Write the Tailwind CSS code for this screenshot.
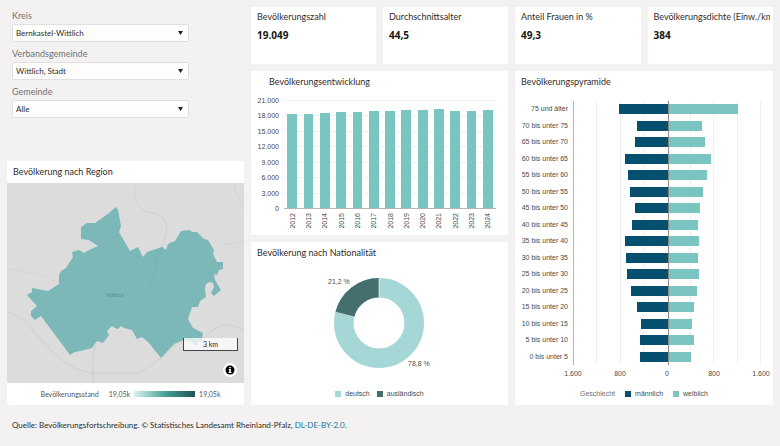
<!DOCTYPE html>
<html lang="de">
<head>
    <meta charset="UTF-8">
    <meta name="viewport" content="width=device-width, initial-scale=1.0">
    <title>Bevölkerung – Bernkastel-Wittlich</title>
    <script src="https://cdn.jsdelivr.net/npm/@tailwindcss/browser@4"></script>
</head>
<body class="bg-[#f3f1f2] text-[#2f2d2b] font-[Lato,'Noto_Sans',sans-serif] min-h-screen">
    <main class="grid grid-cols-[237fr_257fr_258fr] gap-[7px] p-[7px] pb-0">

        <!-- Linke Spalte: Filter und Karte -->
        <div class="flex flex-col min-w-0">
            <form class="flex flex-col gap-[5px] pt-[2px] pl-[5px] w-[182px]">
                <div class="flex flex-col gap-px">
                    <label for="kreis" class="text-[9px] leading-[14px] text-[#757371]">Kreis</label>
                    <div class="relative">
                        <select id="kreis" class="block appearance-none w-full h-[18px] bg-[#fdfdfc] border border-[#e2e0df] rounded-xs pl-[3px] text-[8px] leading-[14px]">
                            <option>Bernkastel-Wittlich</option>
                        </select>
                        <svg class="absolute right-[6px] top-[7px] w-[5px] h-[4px] pointer-events-none" viewBox="0 0 5 4"><path d="M0 0h5L2.5 4z" fill="#222"/></svg>
                    </div>
                </div>
                <div class="flex flex-col gap-px">
                    <label for="verbandsgemeinde" class="text-[9px] leading-[14px] text-[#757371]">Verbandsgemeinde</label>
                    <div class="relative">
                        <select id="verbandsgemeinde" class="block appearance-none w-full h-[18px] bg-[#fdfdfc] border border-[#e2e0df] rounded-xs pl-[3px] text-[8px] leading-[14px]">
                            <option>Wittlich, Stadt</option>
                        </select>
                        <svg class="absolute right-[6px] top-[7px] w-[5px] h-[4px] pointer-events-none" viewBox="0 0 5 4"><path d="M0 0h5L2.5 4z" fill="#222"/></svg>
                    </div>
                </div>
                <div class="flex flex-col gap-px">
                    <label for="gemeinde" class="text-[9px] leading-[14px] text-[#757371]">Gemeinde</label>
                    <div class="relative">
                        <select id="gemeinde" class="block appearance-none w-full h-[18px] bg-[#fdfdfc] border border-[#e2e0df] rounded-xs pl-[3px] text-[8px] leading-[14px]">
                            <option>Alle</option>
                        </select>
                        <svg class="absolute right-[6px] top-[7px] w-[5px] h-[4px] pointer-events-none" viewBox="0 0 5 4"><path d="M0 0h5L2.5 4z" fill="#222"/></svg>
                    </div>
                </div>
            </form>

            <section class="bg-white mt-auto">
                <h2 class="text-[9px] leading-[22px] pl-[6px]">Bevölkerung nach Region</h2>
                <div class="relative h-[200px]">
                    <svg class="w-full h-full bg-[#dcdcdc]" viewBox="0 0 237 200" preserveAspectRatio="xMidYMid slice">
                        <!-- Straßen -->
                        <g fill="none" stroke="#cfcbc5" stroke-width="0.8">
                            <path d="M130 0C126 9 126 20 136 27C142 31 152 29 158 37C162 46 158 55 155 64"/>
                            <path d="M0 129C16 133 24 146 36 159C52 176 66 188 86 190H126C140 189 146 179 154 175C162 170 166 162 173 159C184 155 190 158 196 155C204 151 204 144 220 142C228 142 232 146 237 147"/>
                            <path d="M86 200V174Q87 165 90 160M84 188L88 192M84 192L88 188"/>
                            <path d="M0 87C10 84 14 90 23 90C34 90 42 97 52 99" stroke="#d4d2cf"/>
                            <path d="M208 68C214 63 216 61 222 61S230 58 237 58" stroke="#d4d2cf"/>
                            <path d="M230 0C226 3 227 8 230 12S234 19 237 22M237 15L233 21L237 27" stroke="#d4d2cf"/>
                        </g>
                        <!-- Gemeindegebiet -->
                        <path fill="#7bb8b7" d="M109 24L111 27L114 43L112 49L123 68L131 64L136 74L140 69L155 64L159 67L161 61L168 58L174 48L183 47L185 49L190 49L197 56L201 57L207 67L206 71L210 79L216 79L216 86L212 87L210 92L207 91L208 97L214 107L207 113L204 110L207 104L206 100L203 99L199 101L198 106L199 114L193 118L191 124L185 124L181 136L186 145L196 150L195 155L189 163L183 158L176 157L167 161L154 175L142 160L135 154L130 156L125 147L117 145L114 143L111 146L108 145L105 143L100 148L102 152L96 160L90 158L85 165L73 168L68 169L63 172L34 133L28 137L24 133L24 128L30 123L20 112L25 109L25 105L41 108L52 101L52 92L54 88L59 85L66 74L65 69L72 67L77 70L80 68L91 63L82 57L74 56L74 44L80 40L88 40L102 30Z"/>
                        <path d="M155 64C146 82 150 92 141 104C134 112 126 118 120 124" fill="none" stroke="#75b1b0" stroke-width="0.8"/>
                        <text x="108" y="114" text-anchor="middle" font-size="5" fill="#4f8f8f">Wittlich</text>
                    </svg>
                    <div class="absolute right-[6px] bottom-[32px] w-[55px] h-[13px] border border-t-0 border-[#444] bg-white/75 text-[7px] leading-[12px] text-center">3 km</div>
                    <button type="button" aria-label="Karteninformationen" class="absolute right-[7px] bottom-[6px] w-[14px] h-[14px]">
                        <svg viewBox="0 0 14 14"><circle cx="7" cy="7" r="7" fill="#fff"/><circle cx="7" cy="7" r="4.5" fill="#000"/><path d="M6.3 4h1.6v1.3H6.3zM5.8 6h2.1v3h.6v1H5.6V9h.7V7h-.5z" fill="#fff"/></svg>
                    </button>
                </div>
                <div class="flex items-center justify-center gap-[4px] h-[22px] pl-[10px] text-[7px] text-[#555]">
                    <span class="mr-[6px]">Bevölkerungsstand</span>
                    <span>19,05k</span>
                    <span class="w-[61px] h-[6px] bg-linear-to-r from-[#d6f3ef] via-[#48a39d] to-[#1d5458]"></span>
                    <span>19,05k</span>
                </div>
            </section>
        </div>

        <!-- Mittlere Spalte -->
        <div class="flex flex-col gap-[7px] min-w-0">
            <div class="grid grid-cols-2 gap-[7px]">
                <section class="bg-white h-[57px] pt-[3px] pl-[6px] overflow-hidden whitespace-nowrap">
                    <h2 class="text-[9px] leading-[14px]">Bevölkerungszahl</h2>
                    <p class="text-[10px] leading-[14px] mt-[4px] font-bold font-['Noto_Sans',sans-serif] text-[#161513]">19.049</p>
                </section>
                <section class="bg-white h-[57px] pt-[3px] pl-[6px] overflow-hidden whitespace-nowrap">
                    <h2 class="text-[9px] leading-[14px]">Durchschnittsalter</h2>
                    <p class="text-[10px] leading-[14px] mt-[4px] font-bold font-['Noto_Sans',sans-serif] text-[#161513]">44,5</p>
                </section>
            </div>

            <section class="bg-white h-[164px] pl-[6px] pr-[12px]">
                <h2 class="text-[9px] leading-[22px] pl-[12px]">Bevölkerungsentwicklung</h2>
                <div class="flex font-['Liberation_Sans',Arial,sans-serif] text-[7px] text-[#4a4a4a]">
                    <div class="flex flex-col justify-between w-[27px] h-[117px] mt-[3px] pr-[5px] text-right leading-[9px]">
                        <span>21.000</span><span>18.000</span><span>15.000</span><span>12.000</span><span>9.000</span><span>6.000</span><span>3.000</span><span>0</span>
                    </div>
                    <div class="flex-1 pt-[7px]">
                        <div class="relative h-[109px] border-b border-[#b5b5b5]">
                            <div class="absolute inset-0 flex flex-col">
                                <i class="flex-1 border-t border-[#eef1f2]"></i><i class="flex-1 border-t border-[#eef1f2]"></i><i class="flex-1 border-t border-[#eef1f2]"></i><i class="flex-1 border-t border-[#eef1f2]"></i><i class="flex-1 border-t border-[#eef1f2]"></i><i class="flex-1 border-t border-[#eef1f2]"></i><i class="flex-1 border-t border-[#eef1f2]"></i>
                            </div>
                            <div id="jahre-balken" class="relative h-full flex items-end"></div>
                        </div>
                        <div id="jahre-achse" class="flex pt-[4px]"></div>
                    </div>
                </div>
            </section>

            <section class="bg-white h-[163px] flex flex-col">
                <h2 class="text-[9px] leading-[22px] pl-[6px]">Bevölkerung nach Nationalität</h2>
                <svg class="w-full h-[120px] font-['Liberation_Sans',Arial,sans-serif]" viewBox="0 0 257 120">
                    <!-- Ring: Umfang = 100 Einheiten -->
                    <g fill="none" stroke-width="19.5" transform="rotate(-90 128 59)">
                        <circle cx="128" cy="59" r="35.2" stroke="#a5d7d7" pathLength="100"/>
                        <circle cx="128" cy="59" r="35.2" stroke="#456f6f" pathLength="100" stroke-dasharray="21.2 78.8" stroke-dashoffset="-78.8"/>
                    </g>
                    <path d="M128 14V34M84 48L103 53" stroke="#fff" stroke-width="0.6"/>
                    <text x="77" y="20" font-size="7" fill="#4a4a4a">21,2 %</text>
                    <text x="157" y="102" font-size="7" fill="#4a4a4a">78,8 %</text>
                </svg>
                <div class="flex justify-center items-center gap-[7px] pt-[5px] leading-[10px] font-['Liberation_Sans',Arial,sans-serif] text-[7px] text-[#4a4a4a]">
                    <span class="flex items-center gap-[4px]"><i class="w-[6px] h-[6px] bg-[#a5d7d7]"></i>deutsch</span>
                    <span class="flex items-center gap-[4px]"><i class="w-[6px] h-[6px] bg-[#456f6f]"></i>ausländisch</span>
                </div>
            </section>
        </div>

        <!-- Rechte Spalte -->
        <div class="flex flex-col gap-[7px] min-w-0">
            <div class="grid grid-cols-2 gap-[7px]">
                <section class="bg-white h-[57px] pt-[3px] pl-[6px] overflow-hidden whitespace-nowrap">
                    <h2 class="text-[9px] leading-[14px]">Anteil Frauen in %</h2>
                    <p class="text-[10px] leading-[14px] mt-[4px] font-bold font-['Noto_Sans',sans-serif] text-[#161513]">49,3</p>
                </section>
                <section class="bg-white h-[57px] pt-[3px] pl-[6px] pr-[3px] overflow-hidden whitespace-nowrap">
                    <h2 class="text-[9px] leading-[14px] overflow-hidden">Bevölkerungsdichte (Einw./km²)</h2>
                    <p class="text-[10px] leading-[14px] mt-[4px] font-bold font-['Noto_Sans',sans-serif] text-[#161513]">384</p>
                </section>
            </div>

            <section class="bg-white flex-1">
                <h2 class="text-[9px] leading-[22px] pl-[6px]">Bevölkerungspyramide</h2>
                <div class="flex pt-[8px] pr-[12px] font-['Liberation_Sans',Arial,sans-serif] text-[7px] text-[#4a4a4a]">
                    <div id="alter-achse" class="flex flex-col w-[58px] h-[264px] pr-[5px] text-right"></div>
                    <div class="flex-1 relative h-[264px] border-l border-[#b5b5b5]">
                        <div class="absolute inset-0 grid grid-cols-8">
                            <i class="border-r border-[#eef0f1]"></i><i class="border-r border-[#eef0f1]"></i><i class="border-r border-[#eef0f1]"></i><i></i><i class="border-r border-[#eef0f1]"></i><i class="border-r border-[#eef0f1]"></i><i class="border-r border-[#eef0f1]"></i><i class="border-r border-[#eef0f1]"></i>
                        </div>
                        <div id="alter-balken" class="relative flex flex-col h-full"></div>
                        <i class="absolute inset-y-0 left-1/2 w-px bg-[#8a8a8a]"></i>
                    </div>
                </div>
                <div class="flex justify-between pl-[46px] leading-[10px] pt-[4px] font-['Liberation_Sans',Arial,sans-serif] text-[7px] text-[#4a4a4a]">
                    <span class="w-[24px] text-center">1.600</span><span class="w-[24px] text-center">800</span><span class="w-[24px] text-center">0</span><span class="w-[24px] text-center">800</span><span class="w-[24px] text-center">1.600</span>
                </div>
                <div class="flex justify-center items-center gap-[10px] pt-[10px] leading-[10px] font-['Liberation_Sans',Arial,sans-serif] text-[7px] text-[#4a4a4a]">
                    <span class="text-[#6f6f6f]">Geschlecht</span>
                    <span class="flex items-center gap-[4px]"><i class="w-[6px] h-[6px] bg-[#074f6e]"></i>männlich</span>
                    <span class="flex items-center gap-[4px]"><i class="w-[6px] h-[6px] bg-[#7ac5c2]"></i>weiblich</span>
                </div>
            </section>
        </div>
    </main>

    <footer class="pl-[12px] pt-[13px] text-[8px] leading-[14px]">
        Quelle: Bevölkerungsfortschreibung. © Statistisches Landesamt Rheinland-Pfalz, <a href="https://www.govdata.de/dl-de/by-2-0" class="text-[#14759a]">DL-DE-BY-2.0.</a>
    </footer>

    <script>
        // Einwohner je Jahr
        const jahre = [
            [2012, 18200], [2013, 18330], [2014, 18450], [2015, 18740], [2016, 18740],
            [2017, 18870], [2018, 18950], [2019, 19000], [2020, 19150], [2021, 19290],
            [2022, 18940], [2023, 18910], [2024, 19049]
        ];
        document.getElementById('jahre-balken').innerHTML = jahre.map(([, wert]) =>
            `<div class="flex-1 h-full flex items-end justify-center"><div class="w-3/5 bg-[#7ac5c2]" style="height:${wert / 210}%"></div></div>`
        ).join('');
        document.getElementById('jahre-achse').innerHTML = jahre.map(([jahr]) =>
            `<div class="flex-1 flex justify-center"><span class="[writing-mode:vertical-rl] rotate-180 leading-[9px]">${jahr}</span></div>`
        ).join('');

        // Altersgruppe, männlich, weiblich
        const gruppen = [
            ['75 und älter', 834, 1202], ['70 bis unter 75', 522, 595], ['65 bis unter 70', 550, 637],
            ['60 bis unter 65', 720, 737], ['55 bis unter 60', 675, 675], ['50 bis unter 55', 635, 601],
            ['45 bis unter 50', 561, 561], ['40 bis unter 45', 612, 522], ['35 bis unter 40', 720, 539],
            ['30 bis unter 35', 703, 516], ['25 bis unter 30', 686, 533], ['20 bis unter 25', 624, 499],
            ['15 bis unter 20', 527, 454], ['10 bis unter 15', 454, 414], ['5 bis unter 10', 465, 459],
            ['0 bis unter 5', 465, 403]
        ];
        document.getElementById('alter-achse').innerHTML = gruppen.map(([name]) =>
            `<span class="flex-1 flex items-center justify-end">${name}</span>`
        ).join('');
        document.getElementById('alter-balken').innerHTML = gruppen.map(([, m, w]) =>
            `<div class="flex-1 grid grid-cols-2 items-center">
                <div class="h-[10px] bg-[#074f6e] justify-self-end" style="width:${m / 16}%"></div>
                <div class="h-[10px] bg-[#7ac5c2]" style="width:${w / 16}%"></div>
            </div>`
        ).join('');
    </script>
</body>
</html>
